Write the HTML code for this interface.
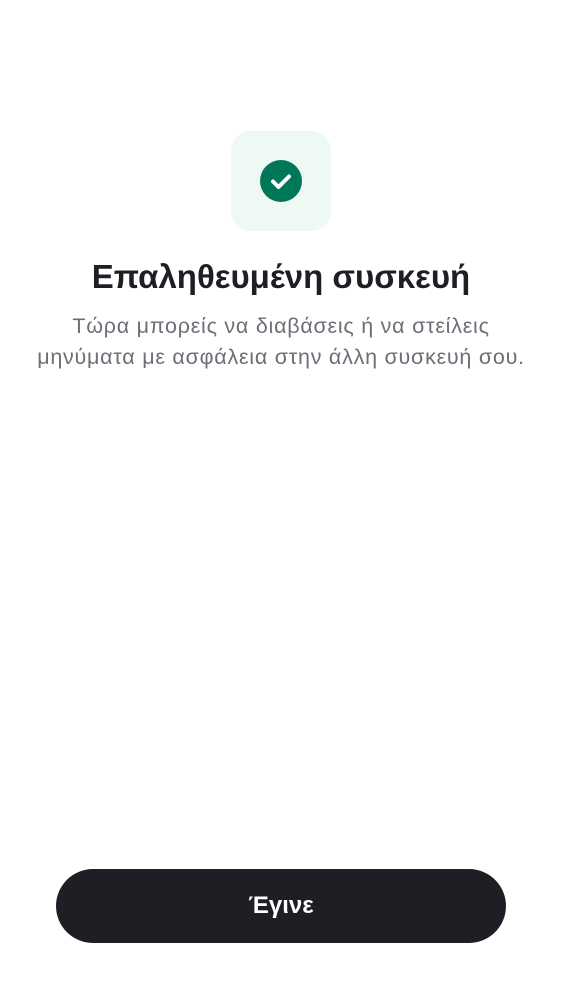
<!DOCTYPE html>
<html><head><meta charset="utf-8"><style>
body{margin:0;width:562px;height:1000px;background:#fff;font-family:"Liberation Sans",sans-serif;position:relative;overflow:hidden}
.box{position:absolute;left:231px;top:131px;width:100px;height:100px;border-radius:20px;background:#eef9f3}
.box svg{position:absolute;left:29px;top:29px}
h1{position:absolute;top:256px;left:0;width:562px;text-align:center;margin:0;font-size:33px;font-weight:bold;color:#1e1f24;line-height:42px}
p{position:absolute;top:311px;left:0;width:562px;text-align:center;margin:0;font-size:21.5px;letter-spacing:0.75px;line-height:31px;color:#6b6f76}
.btn{position:absolute;left:56px;top:869px;width:450px;height:74px;border-radius:37px;background:#1e1f24;color:#fff;font-weight:bold;font-size:24px;line-height:74px;text-align:center}
</style></head><body>
<div class="box"><svg width="42" height="42" viewBox="0 0 42 42"><circle cx="21" cy="21" r="21" fill="#01775a"/><path d="M13 21.5l5.5 5.5L29 16.5" fill="none" stroke="#fff" stroke-width="4" stroke-linecap="round" stroke-linejoin="round"/></svg></div>
<h1>Επαληθευμένη συσκευή</h1>
<p>Τώρα μπορείς να διαβάσεις ή να στείλεις<br>μηνύματα με ασφάλεια στην άλλη συσκευή σου.</p>
<div class="btn">Έγινε</div>
</body></html>
